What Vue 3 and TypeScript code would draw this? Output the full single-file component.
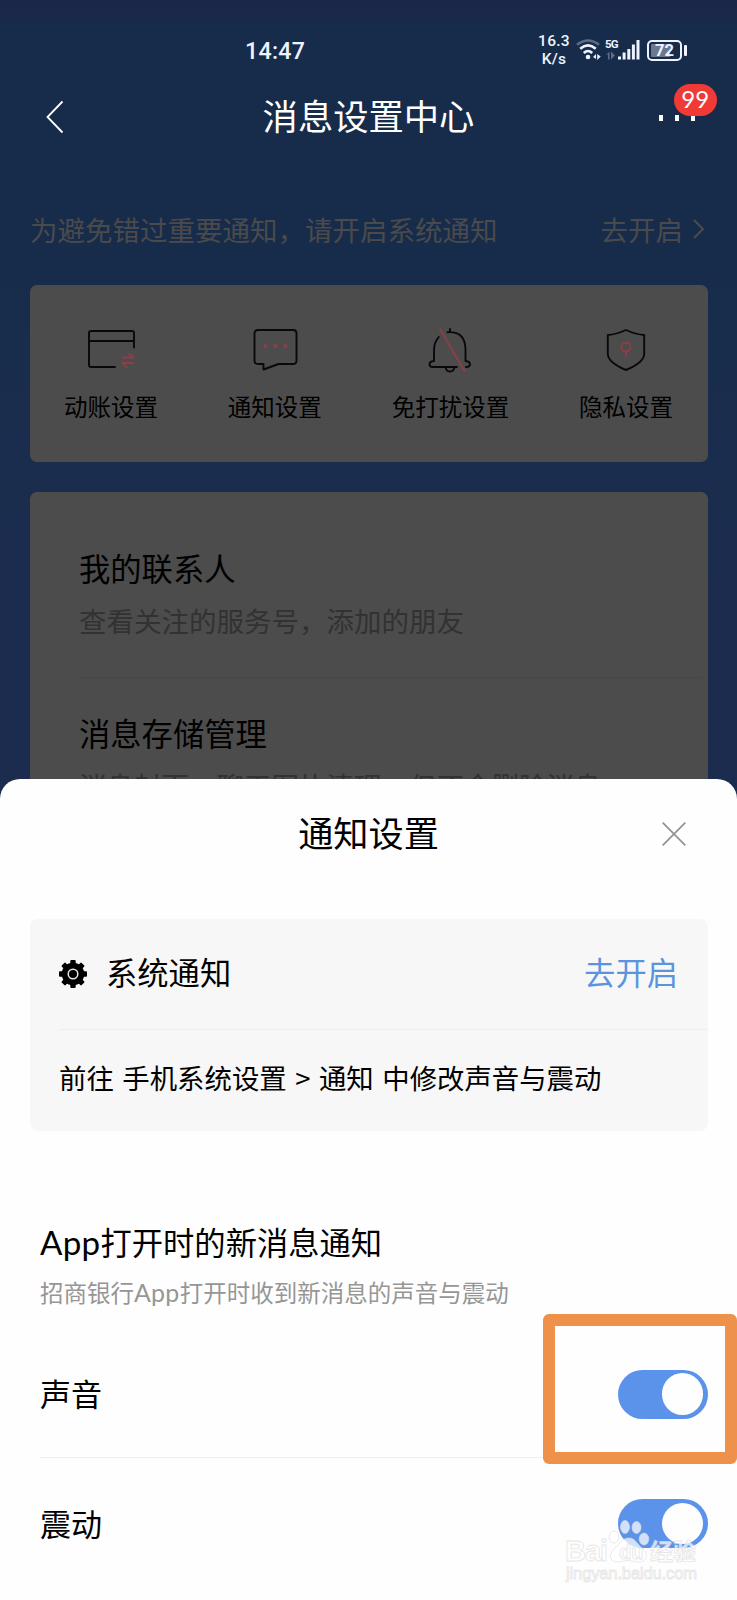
<script setup lang="ts">
import { ref } from 'vue'

interface Shortcut {
  id: string
  label: string
}

interface Toggle {
  label: string
  on: boolean
  highlighted: boolean
}

const shortcuts: Shortcut[] = [
  { id: 'account', label: '动账设置' },
  { id: 'notice', label: '通知设置' },
  { id: 'mute', label: '免打扰设置' },
  { id: 'privacy', label: '隐私设置' },
]

const entries = [
  { title: '我的联系人', note: '查看关注的服务号，添加的朋友' },
  { title: '消息存储管理', note: '消息封面、聊天图片清理，但不会删除消息' },
]

const toggles = ref<Toggle[]>([
  { label: '声音', on: true, highlighted: true },
  { label: '震动', on: true, highlighted: false },
])
</script>

<template>
  <div class="screen">
    <div class="backdrop">
      <div class="status">
        <span class="time">14:47</span>
        <div class="indicators">
          <div class="speed"><span>16.3</span><span>K/s</span></div>
          <svg class="wifi" width="26" height="24" viewBox="0 0 26 24" fill="none">
            <path d="M1 6.8Q12 -1.8 23 6.8" stroke="#5d6c87" stroke-width="2.4" />
            <path d="M4.2 10.7Q12 4 19.8 10.7M7.8 15Q12 11 16.2 15" stroke="#eef3ff" stroke-width="2.6" />
            <circle cx="12" cy="19" r="2.3" fill="#eef3ff" />
            <path d="M17 19l3-3v5zM21.200 16v6l3.500-3.500z" fill="#eef3ff" />
          </svg>
          <div class="cell">
            <span class="gen">5G</span>
            <svg width="35" height="24" viewBox="0 0 35 24">
              <path d="M1 17l3.500-3.500v8h-1.500v-5zM6 13.500v8l4-4z" fill="#5d6c87" />
              <path d="M13 18.500h3v3h-3zM17.600 14.500h3v7h-3zM22.300 11h3v10.500h-3zM26.900 6.500h3v15h-3zM31.500 2h3v19.500h-3z" fill="#eef3ff" />
            </svg>
          </div>
          <div class="battery"><div class="cellbody">72</div><i></i></div>
        </div>
      </div>

      <header class="nav">
        <svg class="back" width="18" height="34" viewBox="0 0 18 34" fill="none">
          <path d="M16.500 1.500L1.500 17L16.500 32.500" stroke="#fff" stroke-width="1.800" />
        </svg>
        <h1>消息设置中心</h1>
        <div class="more">
          <i></i><i></i><i></i>
          <span class="badge">99</span>
        </div>
      </header>

      <div class="hint">
        <span>为避免错过重要通知，请开启系统通知</span>
        <span class="open">去开启
          <svg width="12" height="20" viewBox="0 0 12 20" fill="none">
            <path d="M1 1L10 10L1 19" stroke="#4c4c4e" stroke-width="2" />
          </svg>
        </span>
      </div>

      <section class="shortcuts">
        <div v-for="item in shortcuts" :key="item.id" class="shortcut">
          <svg width="48" height="48" viewBox="0 0 48 48" fill="none" stroke="#090909" stroke-width="1.900" stroke-linecap="round" stroke-linejoin="round">
            <template v-if="item.id === 'account'">
              <path d="M47 21.500V7Q47 5 45 5H4Q2 5 2 7V39Q2 41 4 41H28M2 15H47" />
              <path class="red" d="M35.500 31.500H46.500L42 27.800M46.500 37H35.500L39.500 41" />
            </template>
            <template v-else-if="item.id === 'notice'">
              <path d="M7 4H42Q45.500 4 45.500 7.500V34.500Q45.500 38 42 38H27.500L12.500 43.500V38H7Q3.500 38 3.500 34.500V7.500Q3.500 4 7 4Z" />
              <g class="dots"><circle cx="14.500" cy="20" r="2.100" /><circle cx="24.500" cy="20" r="2.100" /><circle cx="34.300" cy="20" r="2.100" /></g>
            </template>
            <template v-else-if="item.id === 'mute'">
              <path d="M12.800 11Q8 16.500 8 24V35Q3.500 35.500 3.500 38.300Q3.500 41 6.500 41H31M21.500 6.200Q39.500 5 39.500 24V35Q44 35.500 44 38.300Q44 41 40 41M24 3V6M19.500 41Q20 45.500 24 45.500Q28 45.500 28.500 41" />
              <path class="red" d="M14 3L38.500 45" />
            </template>
            <template v-else>
              <path d="M24 4Q34 8.500 42.200 9V28Q42 36.500 24 44Q6 36.500 5.800 28V9Q14 8.500 24 4Z" />
              <circle class="red" cx="24" cy="21" r="4.500" />
              <path class="red" d="M24 25.500V30.500" />
            </template>
          </svg>
          <span>{{ item.label }}</span>
        </div>
      </section>

      <section class="entries">
        <div v-for="entry in entries" :key="entry.title" class="entry">
          <h2>{{ entry.title }}</h2>
          <p>{{ entry.note }}</p>
        </div>
      </section>
    </div>

    <main class="sheet">
      <div class="sheethead">
        <h1>通知设置</h1>
        <svg width="24" height="24" viewBox="0 0 24 24">
          <path d="M.7.7L23.300 23.300M23.300.7L.7 23.300" stroke="#929292" stroke-width="1.700" />
        </svg>
      </div>

      <section class="system">
        <div class="sysrow">
          <svg width="28" height="28" viewBox="0 0 28 28">
            <g fill="#000">
              <circle cx="14" cy="14" r="11.300" />
              <g v-for="n in 4" :key="n" :transform="`rotate(${n * 45} 14 14)`">
                <rect x="11.300" y="0" width="5.400" height="28" rx="1" />
              </g>
            </g>
            <circle cx="14" cy="14" r="4.800" fill="none" stroke="#e8e8e8" stroke-width="1.500" />
          </svg>
          <span class="name">系统通知</span>
          <span class="link">去开启</span>
        </div>
        <div class="path">前往 手机系统设置 &gt; 通知 中修改声音与震动</div>
      </section>

      <section class="inapp">
        <h2><span>App</span>打开时的新消息通知</h2>
        <p>招商银行<span>App</span>打开时收到新消息的声音与震动</p>
        <div v-for="item in toggles" :key="item.label" class="setting">
          <span>{{ item.label }}</span>
          <button :class="['switch', { on: item.on }]" type="button" @click="item.on = !item.on"><i></i></button>
          <div v-if="item.highlighted" class="mark"></div>
        </div>
      </section>
    </main>

    <div class="watermark">
      <svg width="150" height="62" viewBox="0 0 150 62">
        <g fill="#fff" fill-opacity=".72" stroke="#dcdcdc" stroke-opacity=".7" stroke-width=".9">
          <ellipse cx="65" cy="17" rx="4.500" ry="6.500" />
          <ellipse cx="76.500" cy="17.500" rx="4.500" ry="6" />
          <ellipse cx="54" cy="27" rx="4.800" ry="6" />
          <ellipse cx="84" cy="29" rx="4.800" ry="6" />
          <path d="M69 28C75 28 77 34 82 38C90 45 86 52 79 52C74 52 72 50.500 68 50.500C64 50.500 62 52 57 52C50 52 48 45 54 39C60 34 62 28 69 28Z" />
          <text x="5" y="51" class="wm-bai" textLength="43">Bai</text>
          <text x="59" y="49" class="wm-du">du</text>
          <text x="90" y="50" class="wm-cn">经验</text>
          <text x="6" y="69" class="wm-url" textLength="131">jingyan.baidu.com</text>
        </g>
      </svg>
    </div>
  </div>
</template>

<style>
body {
  margin: 0;
}
</style>

<style scoped>
.screen {
  position: relative;
  width: 737px;
  height: 1600px;
  overflow: hidden;
  background: #fefefe;
  font-family: "Noto Sans CJK SC", sans-serif;
  font-weight: 400;
  color: #000;
}
h1, h2, p {
  margin: 0;
  font-weight: inherit;
  white-space: nowrap;
}
i {
  display: block;
}
svg {
  display: block;
  flex: none;
  overflow: visible;
}
.backdrop {
  height: 800px;
  overflow: hidden;
  background: linear-gradient(#1b2749 0, #1a294a 18px, #172b4a 24px, #172c4b 260px, #1b2d4e 520px, #1b2c4e 100%);
}
.status {
  display: flex;
  align-items: center;
  justify-content: space-between;
  height: 60px;
  padding: 20px 50px 0 245px;
  color: #eef3ff;
  font-family: Roboto, sans-serif;
  font-weight: 500;
}
.time {
  padding-top: 1px;
  font-size: 23.2px;
  letter-spacing: 0.3px;
}
.indicators {
  display: flex;
  align-items: center;
  height: 60px;
}
.speed {
  display: flex;
  flex-direction: column;
  align-items: center;
  width: 32px;
  margin-right: 6px;
  font-size: 15.5px;
  line-height: 18px;
  letter-spacing: 0.3px;
}
.wifi {
  margin-right: 3px;
}
.cell {
  position: relative;
  margin-right: 7px;
}
.gen {
  position: absolute;
  left: 0;
  top: 1px;
  font-size: 11.5px;
  line-height: 11px;
  letter-spacing: -0.8px;
  font-weight: 700;
}
.battery {
  display: flex;
  align-items: center;
  gap: 2px;
}
.cellbody {
  box-sizing: border-box;
  width: 35px;
  height: 21px;
  border: 2px solid #eef3ff;
  border-radius: 5px;
  background: linear-gradient(90deg, #6c7890 72%, #172b4a 72%) content-box;
  padding: 2px;
  font-size: 16.5px;
  font-weight: 700;
  line-height: 14px;
  text-align: center;
}
.battery i {
  width: 3px;
  height: 11px;
  border-radius: 1px;
  background: #eef3ff;
}
.nav {
  display: grid;
  grid-template-columns: 100px 1fr 100px;
  align-items: center;
  height: 72px;
  color: #fff;
}
.back {
  margin: 1px 0 0 46px;
}
.nav h1 {
  padding-bottom: 3px;
  font-size: 35.3px;
  line-height: 50px;
  text-align: center;
}
.more {
  position: relative;
  display: flex;
  gap: 12px;
  padding: 4px 0 0 22px;
}
.more i {
  width: 4px;
  height: 6px;
  background: #fff;
}
.badge {
  position: absolute;
  left: 36.5px;
  top: -27px;
  width: 43.5px;
  height: 32px;
  border-radius: 16px;
  background: #ef3a35;
  font: 400 24px/29px Lato, sans-serif;
  text-align: center;
}
.hint {
  display: flex;
  justify-content: space-between;
  margin-top: 57px;
  height: 40px;
  padding: 0 32px 0 30px;
  font-size: 27.5px;
  line-height: 40px;
  color: #4a4a4c;
}
.open {
  display: flex;
  align-items: center;
  gap: 10px;
}
.shortcuts {
  box-sizing: border-box;
  display: flex;
  justify-content: space-between;
  margin: 36px 29px 30px 30px;
  height: 177px;
  padding: 41px 35px 0 34px;
  border-radius: 7px;
  background: #4c4c4c;
}
.shortcut {
  display: flex;
  flex-direction: column;
  align-items: center;
  gap: 20px;
  font-size: 23.5px;
  line-height: 24px;
}
.red {
  stroke: #8c3f46;
}
.dots {
  fill: #8c3f46;
  stroke: none;
}
.entries {
  margin: 0 29px 0 30px;
  height: 400px;
  border-radius: 7px 7px 0 0;
  background: #4c4c4c;
}
.entry {
  box-sizing: border-box;
  height: 186px;
  margin: 0 5px 0 49px;
  border-bottom: 1px solid #474747;
}
.entry:not(:first-child) {
  margin-top: -21px;
}
.entry h2 {
  padding-top: 56px;
  font-size: 31.3px;
  line-height: 40px;
}
.entry p {
  padding-top: 12px;
  font-size: 27.5px;
  line-height: 40px;
  color: #323232;
}
.sheet {
  position: relative;
  margin-top: -21px;
  height: 821px;
  border-radius: 20px 20px 0 0;
  background: #fefefe;
}
.sheethead {
  display: grid;
  grid-template-columns: 1fr auto 1fr;
  align-items: center;
  height: 110px;
}
.sheethead h1 {
  grid-column: 2;
  padding-bottom: 4px;
  font-size: 35.2px;
  line-height: 50px;
}
.sheethead svg {
  justify-self: end;
  margin-right: 51px;
}
.system {
  margin: 30px 29px 0 30px;
  border-radius: 8px;
  background: #f7f7f7;
}
.sysrow {
  display: flex;
  align-items: center;
  height: 110px;
  margin-left: 29px;
  padding-right: 30px;
  border-bottom: 1px solid #efefef;
  font-size: 31.3px;
  line-height: 40px;
}
.name, .link {
  padding-bottom: 4px;
}
.name {
  margin-left: 19px;
}
.link {
  margin-left: auto;
  color: #5b94de;
}
.path {
  height: 101px;
  padding-left: 29px;
  font-size: 27.4px;
  line-height: 94px;
  word-spacing: 2.4px;
  white-space: nowrap;
}
.inapp {
  padding: 91px 29px 0 40px;
}
.inapp h2 {
  font-size: 31.3px;
  line-height: 40px;
}
.inapp h2 span, .inapp p span {
  font-family: Lato, sans-serif;
  font-size: 1.06em;
  letter-spacing: 0.3px;
}
.inapp p {
  margin: 15px 0 24px;
  font-size: 23.5px;
  line-height: 30px;
  color: #969696;
}
.setting {
  position: relative;
  display: flex;
  align-items: center;
  justify-content: space-between;
  height: 126px;
  border-bottom: 1px solid #efefef;
  font-size: 31px;
}
.setting > span {
  padding-bottom: 3px;
}
.setting:last-child {
  height: 131px;
  border: 0;
}
.switch {
  display: flex;
  align-items: center;
  width: 90.5px;
  height: 49px;
  padding: 0 5px;
  border: 0;
  border-radius: 25px;
  background: #ccc;
}
.switch.on {
  justify-content: flex-end;
  background: #5b93eb;
}
.switch i {
  width: 41.5px;
  height: 41.5px;
  border-radius: 50%;
  background: #fefefe;
}
.mark {
  position: absolute;
  right: -29px;
  top: -17px;
  box-sizing: border-box;
  width: 194px;
  height: 150px;
  border: 12px solid #ee924b;
  border-radius: 6px;
}
.watermark {
  position: absolute;
  left: 560px;
  top: 1510px;
}
.wm-bai {
  font: 700 29px "Liberation Sans", sans-serif;
}
.wm-du {
  font: 700 20px "Liberation Sans", sans-serif;
}
.wm-cn {
  font: 700 23px "Noto Sans CJK SC", sans-serif;
}
.wm-url {
  font: 400 16.5px "Liberation Sans", sans-serif;
}
</style>
